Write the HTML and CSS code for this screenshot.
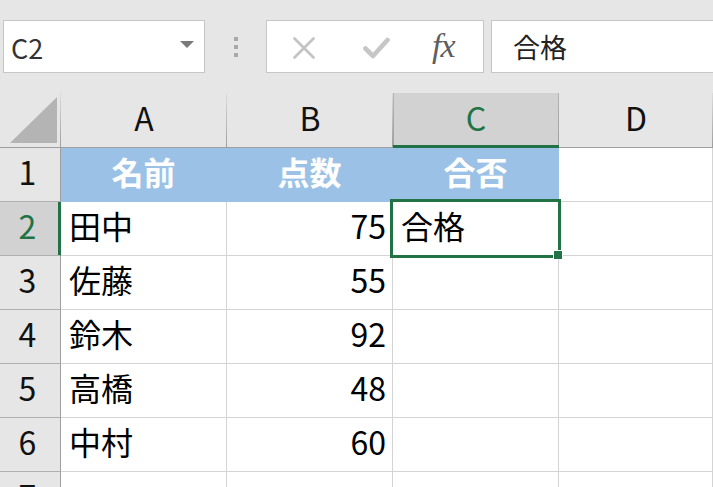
FILE: index.html
```html
<!DOCTYPE html>
<html lang="ja">
<head>
<meta charset="utf-8">
<title>Sheet</title>
<link rel="stylesheet" href="styles.css">
</head>
<body>
<div class="toolbar">
  <div class="namebox">
    <span class="ref">C2</span>
    <svg class="caret" width="14" height="7" viewBox="0 0 14 7"><polygon points="0,0 14,0 7,7" fill="#7a7a7a"/></svg>
  </div>
  <div class="grip"><span></span><span></span><span></span></div>
  <div class="fbuttons">
    <svg class="ico-x" width="22" height="22" viewBox="0 0 22 22"><path d="M1.5 1.5 L20.5 20.5 M20.5 1.5 L1.5 20.5" stroke="#c3c3c3" stroke-width="2.6" stroke-linecap="round"/></svg>
    <svg class="ico-check" width="27" height="22" viewBox="0 0 27 22"><path d="M2.5 11.5 L10 19 L24.5 3" stroke="#c6c6c6" stroke-width="4.6" fill="none" stroke-linecap="round" stroke-linejoin="round"/></svg>
    <span class="fx">fx</span>
  </div>
  <div class="finput">合格</div>
</div>
<div class="sheet">
  <div class="hd corner"><svg width="61" height="55" viewBox="0 0 61 55"><polygon points="10,50 57,50 57,4" fill="#b4b4b4"/></svg></div>
  <div class="hd col">A</div>
  <div class="hd col">B</div>
  <div class="hd col sel">C</div>
  <div class="hd col">D</div>

  <div class="rh">1</div>
  <div class="c title">名前</div>
  <div class="c title">点数</div>
  <div class="c title">合否</div>
  <div class="c"></div>

  <div class="rh sel">2</div>
  <div class="c">田中</div>
  <div class="c num">75</div>
  <div class="c">合格</div>
  <div class="c"></div>

  <div class="rh">3</div>
  <div class="c">佐藤</div>
  <div class="c num">55</div>
  <div class="c"></div>
  <div class="c"></div>

  <div class="rh">4</div>
  <div class="c">鈴木</div>
  <div class="c num">92</div>
  <div class="c"></div>
  <div class="c"></div>

  <div class="rh">5</div>
  <div class="c">高橋</div>
  <div class="c num">48</div>
  <div class="c"></div>
  <div class="c"></div>

  <div class="rh">6</div>
  <div class="c">中村</div>
  <div class="c num">60</div>
  <div class="c"></div>
  <div class="c"></div>

  <div class="rh">7</div>
  <div class="c"></div>
  <div class="c"></div>
  <div class="c"></div>
  <div class="c"></div>

  <div class="selection"></div>
  <div class="handle"></div>
</div>
</body>
</html>
```

FILE: styles.css
```css
html, body {
  margin: 0;
  padding: 0;
}
body {
  width: 713px;
  height: 487px;
  overflow: hidden;
  background: #e6e6e6;
  font-family: "Noto Sans CJK JP", "Noto Sans", sans-serif;
  color: #000;
}

/* ---------- toolbar ---------- */
.toolbar {
  height: 93px;
  box-sizing: border-box;
  padding: 20px 0 0 3px;
  display: flex;
  align-items: flex-start;
}
.namebox {
  width: 202px;
  height: 53px;
  box-sizing: border-box;
  border: 1px solid #c6c6c6;
  background: #fff;
  display: flex;
  align-items: center;
  justify-content: space-between;
  padding: 0 10px 0 7px;
}
.ref {
  font-size: 27px;
  line-height: 1;
  color: #333;
  padding-top: 2px;
}
.caret {
  margin-top: -4px;
}
.grip {
  width: 61px;
  height: 53px;
  display: flex;
  flex-direction: column;
  align-items: center;
  justify-content: center;
  gap: 4px;
  box-sizing: border-box;
}
.grip span {
  width: 4px;
  height: 4px;
  background: #a8a8a8;
}
.fbuttons {
  width: 218px;
  height: 53px;
  box-sizing: border-box;
  border: 1px solid #c6c6c6;
  background: #fff;
  display: flex;
  align-items: center;
  padding-left: 26px;
}
.ico-x {
  margin-top: 2px;
}
.ico-check {
  margin-left: 48px;
  margin-top: 2px;
}
.fx {
  margin-left: 42px;
  font-family: "Liberation Serif", "DejaVu Serif", serif;
  font-style: italic;
  font-size: 34px;
  line-height: 1;
  color: #5e5e5e;
  letter-spacing: -1px;
  padding-bottom: 2px;
}
.finput {
  margin-left: 7px;
  flex: 1;
  margin-right: -2px;
  height: 53px;
  box-sizing: border-box;
  border: 1px solid #c6c6c6;
  background: #fff;
  display: flex;
  align-items: center;
  padding-left: 21px;
  font-size: 27px;
  line-height: 1;
  color: #222;
}

/* ---------- sheet ---------- */
.sheet {
  position: relative;
  display: grid;
  grid-template-columns: 61px 166px 166px 166px 1fr;
  grid-template-rows: 55px;
  grid-auto-rows: 54px;
  font-size: 32px;
  line-height: 1;
}
.hd {
  box-sizing: border-box;
  border-bottom: 1px solid #9f9f9f;
  background: linear-gradient(#dcdcdc, #9e9e9e) right top / 1px 100% no-repeat, #e6e6e6;
  display: flex;
  align-items: center;
  justify-content: center;
  color: #111;
}
.hd.corner {
  align-items: stretch;
  justify-content: stretch;
}
.hd.corner svg {
  display: block;
}
.hd.col {
  padding-bottom: 6px;
}
.hd.sel {
  background: linear-gradient(#b4b4b4, #a0a0a0) right top / 1px 100% no-repeat,
              linear-gradient(#b4b4b4, #a0a0a0) left top / 1px 100% no-repeat, #d2d2d2;
  color: #217346;
  border-bottom: 1px solid #217346;
  box-shadow: inset 0 -2px 0 #217346;
}
.rh {
  box-sizing: border-box;
  background: #e6e6e6;
  border-right: 1px solid #9f9f9f;
  border-bottom: 1px solid #b0b0b0;
  display: flex;
  align-items: center;
  justify-content: center;
  color: #111;
  padding: 0 5px 7px 0;
}
.rh.sel {
  background: #d2d2d2;
  color: #217346;
  border-right-color: #217346;
  box-shadow: inset -2px 0 0 #217346;
}
.c {
  box-sizing: border-box;
  background: #fff;
  border-right: 1px solid #d4d4d4;
  border-bottom: 1px solid #d4d4d4;
  display: flex;
  align-items: center;
  padding: 0 6px 7px 8px;
  white-space: nowrap;
}
.c.num {
  justify-content: flex-end;
}
.c.title {
  background: #9bc2e6;
  border-color: #9bc2e6;
  color: #fff;
  font-weight: bold;
  justify-content: center;
  padding: 0 0 8px 0;
}

/* selection overlay */
.selection {
  position: absolute;
  left: 390px;
  top: 106px;
  width: 171px;
  height: 59px;
  box-sizing: border-box;
  border: 3px solid #217346;
}
.handle {
  position: absolute;
  left: 553px;
  top: 157px;
  width: 8px;
  height: 8px;
  background: #217346;
  border: 1px solid #fff;
}
```
